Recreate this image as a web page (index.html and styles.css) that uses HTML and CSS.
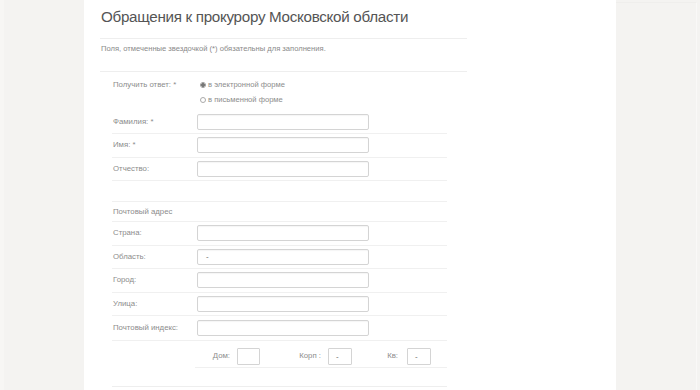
FILE: index.html
```html
<!DOCTYPE html>
<html lang="ru">
<head>
<meta charset="utf-8">
<link rel="stylesheet" href="styles.css">
</head>
<body>
<div class="page">
  <aside class="side side-left"></aside>
  <main class="main">
    <div class="content">
      <h1 class="title">Обращения к прокурору Московской области</h1>
      <p class="note">Поля, отмеченные звездочкой (*) обязательны для заполнения.</p>
      <form class="form">
        <div class="row row-radio">
          <div class="label">Получить ответ: *</div>
          <div class="radios">
            <div class="radio"><span class="dot checked"></span>в электронной форме</div>
            <div class="radio"><span class="dot"></span>в письменной форме</div>
          </div>
        </div>
        <div class="row"><div class="label">Фамилия: *</div><div class="input"></div></div>
        <div class="row"><div class="label">Имя: *</div><div class="input"></div></div>
        <div class="row"><div class="label">Отчество:</div><div class="input"></div></div>
        <div class="row row-empty"></div>
        <div class="row row-section"><div class="label wide">Почтовый адрес</div></div>
        <div class="row"><div class="label">Страна:</div><div class="input"></div></div>
        <div class="row"><div class="label">Область:</div><div class="input">-</div></div>
        <div class="row"><div class="label">Город:</div><div class="input"></div></div>
        <div class="row"><div class="label">Улица:</div><div class="input"></div></div>
        <div class="row row-last"><div class="label">Почтовый индекс:</div><div class="input"></div></div>
        <div class="house-wrap">
          <div class="house">
            <span class="hl">Дом:</span><span class="box"></span>
            <span class="hl">Корп :</span><span class="box">-</span>
            <span class="hl hl3">Кв:</span><span class="box">-</span>
          </div>
          <div class="spacer"></div>
        </div>
      </form>
    </div>
  </main>
  <aside class="side side-right"><div class="panel"></div></aside>
</div>
</body>
</html>
```
FILE: styles.css
```css
* { box-sizing: border-box; }
html, body { margin: 0; padding: 0; }
body {
  font-family: "Liberation Sans", Arial, sans-serif;
  background: #ffffff;
  color: #888;
}
.page {
  display: flex;
  width: 700px;
  height: 390px;
  overflow: hidden;
}
.side {
  background: #f4f3f1;
  flex: 0 0 84px;
}
.side-left {
  border-left: 4px solid #f7f6f4;
}
.side-right {
  padding: 2px 3px 0 0;
  background: #f4f3f1;
}
.panel {
  height: 100%;
  border-top: 1px solid #efeeec;
  border-right: 1px solid #f9f8f7;
}
.main {
  flex: 0 0 532px;
  background: #fff;
}
.content {
  margin-left: 16px;
  width: 367px;
}
.title {
  margin: 0;
  padding: 7px 0 0 1px;
  height: 39px;
  font-size: 15.2px;
  letter-spacing: -0.3px;
  font-weight: normal;
  line-height: 20px;
  color: #555;
  border-bottom: 1px solid #eeeeee;
}
.note {
  margin: 0;
  padding: 5px 0 0 1px;
  height: 33px;
  font-size: 7.6px;
  line-height: 10px;
  color: #8a8a8a;
  border-bottom: 1px solid #eeeeee;
}
.form {
  margin-left: 12px;
  width: 335px;
}
.row {
  display: flex;
  align-items: center;
  height: 23.5px;
  padding: 3px 0 3.5px;
  border-bottom: 1px solid #f0f0f0;
}
.label {
  flex: 0 0 85px;
  padding-left: 1px;
  font-size: 7.8px;
  line-height: 10px;
  color: #8c8c8c;
}
.label.wide { flex: 1 1 auto; }
.input {
  width: 172px;
  height: 16px;
  border: 1px solid #d4d4d4;
  border-radius: 2px;
  box-shadow: inset 0 1px 1px rgba(0,0,0,0.04);
  font-size: 8px;
  line-height: 14px;
  padding-left: 8px;
  color: #666;
}
.row-radio {
  height: 38.5px;
  align-items: flex-start;
  padding: 8px 0 0;
  border-bottom: none;
}
.row-radio .label { line-height: 10px; }
.radios {
  display: flex;
  flex-direction: column;
  gap: 5px;
  padding-left: 3px;
}
.radio {
  display: flex;
  align-items: center;
  font-size: 7.6px;
  line-height: 10px;
  color: #8c8c8c;
}
.dot {
  width: 6px;
  height: 6px;
  border-radius: 50%;
  border: 1px solid #aaa;
  margin-right: 2px;
  background: #fff;
}
.dot.checked {
  background: radial-gradient(circle, #777 0 1.6px, #fff 1.8px);
  border-color: #999;
}
.row-empty { height: 21px; padding: 0; }
.row-section { height: 20px; padding: 0; }
.row-last { height: 25px; padding-top: 4px; }
.house {
  margin-left: 83px;
  display: grid;
  grid-template-columns: 42px 23px 68px 24px 55px 24px;
  align-items: center;
  height: 27px;
  padding: 6.5px 0 2.5px;
  border-bottom: 1px solid #f0f0f0;
}
.hl {
  text-align: right;
  padding-right: 7px;
  font-size: 7.8px;
  line-height: 10px;
  color: #8c8c8c;
}
.hl3 { padding-right: 9px; }
.box {
  height: 17px;
  border: 1px solid #d4d4d4;
  border-radius: 1px;
  font-size: 8px;
  line-height: 15px;
  padding-left: 7px;
  color: #666;
}
.spacer {
  height: 19px;
  border-bottom: 1px solid #eeeeee;
}
```
